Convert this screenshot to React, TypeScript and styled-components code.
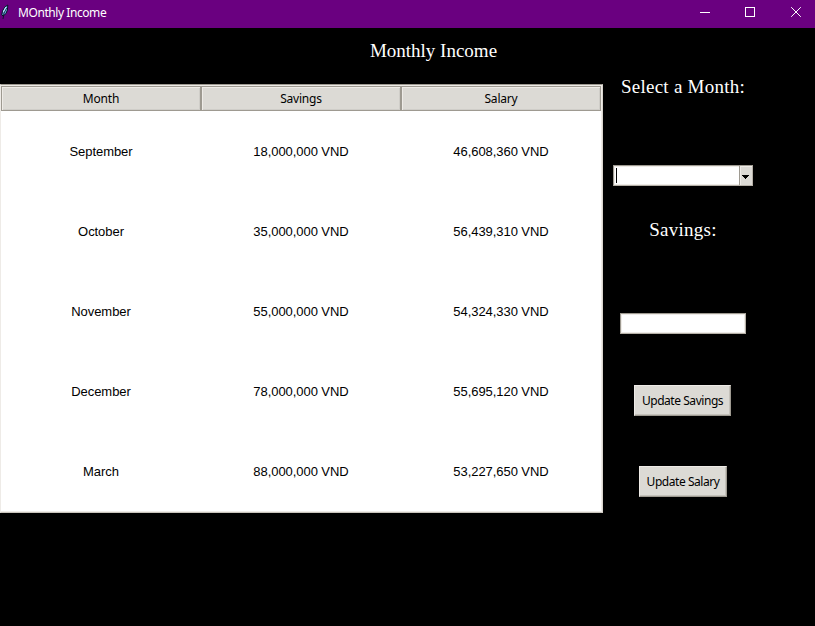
import React from 'react';
import styled, { createGlobalStyle } from 'styled-components';

const GlobalStyle = createGlobalStyle`
  * { box-sizing: border-box; }
  body { margin: 0; background: #000; overflow: hidden; }
`;

const Window = styled.div`
  width: 815px;
  height: 626px;
  background: #000;
  color: #000;
  font-family: 'Noto Sans', 'Open Sans', sans-serif;
  font-size: 12px;
`;

const TitleBar = styled.header`
  display: flex;
  align-items: center;
  height: 28px;
  background: #6a0080;
  color: #fff;
`;

const FeatherIcon = styled.svg`
  width: 10px;
  height: 16px;
  margin: -5px 8px 0 0;
`;

const WindowTitle = styled.span`
  flex: 1;
  line-height: 26px;
  height: 28px;
  letter-spacing: -0.43px;
`;

const WindowButtons = styled.div`
  display: flex;
  align-items: center;
  gap: 35px;
  height: 28px;
  padding: 0 14px 4px 0;
  svg { display: block; width: 10px; height: 10px; }
  svg:nth-child(-n + 2) { margin-left: -1px; margin-right: 1px; }
`;

const Heading = styled.h1<{ $spacing: number }>`
  margin: 0;
  color: #fff;
  font: 400 19px/22px 'Liberation Serif', serif;
  letter-spacing: ${(p) => p.$spacing}px;
  text-align: center;
  white-space: nowrap;
`;

const PageHeading = styled.div`
  width: 815px;
  height: 56px;
  padding: 12px 0 0 52px;
`;

const Content = styled.main`
  display: flex;
  align-items: flex-start;
`;

const Tree = styled.div`
  width: 603px;
  height: 429px;
  background: #fff;
  border: 1px solid;
  border-color: #9e9a91 #d9d5ce #c9c5bd #eeebe7;
  box-shadow: inset -1px -1px #eeebe7, inset 0 1px #eeebe7;
`;

const HeaderRow = styled.div`
  display: grid;
  grid-template-columns: repeat(3, 200px);
  padding-top: 1px;
`;

const HeaderCell = styled.div`
  height: 25px;
  border: 1px solid #9e9a91;
  background: #dcdad5;
  box-shadow: inset 1px 1px #eeebe7, inset -1px -1px #cfcdc8;
  line-height: 24px;
  letter-spacing: -0.2px;
  text-align: center;
`;

const DataRow = styled.div`
  display: grid;
  grid-template-columns: repeat(3, 200px);
  height: 80px;
  line-height: 82px;
  text-align: center;
  font-family: 'Liberation Sans', Arial, sans-serif;
  font-size: 13px;
  letter-spacing: -0.06px;
`;

const Controls = styled.aside`
  display: flex;
  flex-direction: column;
  align-items: center;
  width: 140px;
  margin: -8px 0 0 10px;
`;

const Field = styled.div<{ $width: number; $top: number }>`
  display: flex;
  align-items: stretch;
  width: ${(p) => p.$width}px;
  height: 21px;
  margin-top: ${(p) => p.$top}px;
  border: 1px solid;
  border-color: #9e9a91 #b5b0a7 #b5b0a7 #9e9a91;
  background: #fff;
  box-shadow: inset 0 0 0 1px #eeebe7;
`;

const Caret = styled.span`
  width: 1px;
  height: 15px;
  margin: 2px auto 0 2px;
  background: #000;
`;

const DropButton = styled.span`
  display: flex;
  align-items: center;
  justify-content: center;
  width: 13px;
  border-left: 1px solid #9e9a91;
  background: #dcdad5;
  box-shadow: inset 1px 1px #eeebe7;
  svg { flex: none; width: 7px; height: 4px; margin: 2px 1px 0 0; }
`;

const SavingsLabel = styled.div`
  margin-top: 33px;
`;

const Button = styled.button<{ $width: number; $top: number }>`
  width: ${(p) => p.$width}px;
  height: 31px;
  margin: ${(p) => p.$top}px 0 0;
  padding: 0;
  border: 1px solid;
  border-color: #eeebe7 #9e9a91 #9e9a91 #eeebe7;
  background: #dcdad5;
  box-shadow: inset -1px -1px #c4c1ba;
  color: #000;
  font: inherit;
  line-height: 30px;
  letter-spacing: -0.45px;
  white-space: nowrap;
  &:nth-last-child(2) { margin-right: 1px; }
`;

const columns = ['Month', 'Savings', 'Salary'];
const rows = [
  ['September', '18,000,000 VND', '46,608,360 VND'],
  ['October', '35,000,000 VND', '56,439,310 VND'],
  ['November', '55,000,000 VND', '54,324,330 VND'],
  ['December', '78,000,000 VND', '55,695,120 VND'],
  ['March', '88,000,000 VND', '53,227,650 VND'],
];

export default function App() {
  return (
    <Window>
      <GlobalStyle />
      <TitleBar>
        <FeatherIcon viewBox="0 0 10 16">
          <path d="M7.8 1 5 2.8 2.5 7 1.8 11 3.2 12 6 9.5 7.4 6Z" fill="#6bb2e8" stroke="#071426" strokeWidth="1" />
          <path d="M6.5 4 4 9 3 15" fill="none" stroke="#071426" strokeWidth=".9" />
          <path d="M6 3 3.3 8" stroke="#c5e9ff" strokeWidth="1.1" />
        </FeatherIcon>
        <WindowTitle>MOnthly Income</WindowTitle>
        <WindowButtons>
          <svg viewBox="0 0 10 10"><path d="M0 5.5H10" stroke="#fff" /></svg>
          <svg viewBox="0 0 10 10"><rect x=".5" y=".5" width="9" height="9" fill="none" stroke="#fff" /></svg>
          <svg viewBox="0 0 10 10"><path d="M.2.2 9.8 9.8M9.8.2.2 9.8" stroke="#fff" /></svg>
        </WindowButtons>
      </TitleBar>
      <PageHeading><Heading $spacing={0}>Monthly Income</Heading></PageHeading>
      <Content>
        <Tree>
          <HeaderRow>
            {columns.map((name) => <HeaderCell key={name}>{name}</HeaderCell>)}
          </HeaderRow>
          {rows.map((row) => (
            <DataRow key={row[0]}>
              {row.map((value) => <span key={value}>{value}</span>)}
            </DataRow>
          ))}
        </Tree>
        <Controls>
          <Heading $spacing={0.25}>Select a Month:</Heading>
          <Field $width={140} $top={67}>
            <Caret />
            <DropButton>
              <svg viewBox="0 0 7 4" shapeRendering="crispEdges"><path d="M0 0H7L3.5 4Z" /></svg>
            </DropButton>
          </Field>
          <SavingsLabel><Heading $spacing={0.25}>Savings:</Heading></SavingsLabel>
          <Field $width={126} $top={72} />
          <Button $width={97} $top={51}>Update Savings</Button>
          <Button $width={88} $top={50}>Update Salary</Button>
        </Controls>
      </Content>
    </Window>
  );
}
